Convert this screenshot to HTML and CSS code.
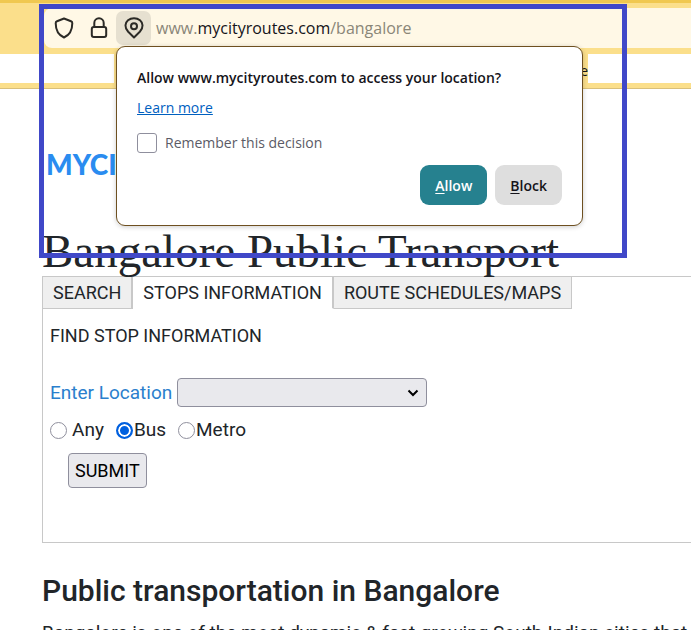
FILE: index.html
```html
<!DOCTYPE html>
<html lang="en">
<head>
    <meta charset="UTF-8">
    <meta name="viewport" content="width=device-width, initial-scale=1.0">
    <title>Bangalore Public Transport</title>
    <link rel="stylesheet" href="styles.css">
</head>
<body>

<header class="browser">
    <div class="toolbar">
        <div class="address-bar">
            <button class="icon-btn" aria-label="Tracking protection">
                <svg width="20" height="22" viewBox="0 0 20 22"><path d="M10 1.5 L17 4.3 Q18.3 4.8 18.3 6.2 C18.3 13 15.5 18 10 20.5 C4.5 18 1.7 13 1.7 6.2 Q1.7 4.8 3 4.3 Z"/></svg>
            </button>
            <button class="icon-btn" aria-label="Site security">
                <svg width="20" height="22" viewBox="0 0 20 22"><rect x="2.8" y="10" width="14.4" height="10" rx="2"/><path d="M5.3 10 V6 a4.7 4.7 0 0 1 9.4 0 V10"/></svg>
            </button>
            <button class="icon-btn active" aria-label="Location permission">
                <svg width="20" height="22" viewBox="0 0 20 22"><path d="M10 20.5 L4.2 14.8 C0.2 10.5 1 5.8 4 3.3 C7.4 0.5 12.6 0.5 16 3.3 C19 5.8 19.8 10.5 15.8 14.8 Z"/><circle cx="10" cy="9.2" r="3"/></svg>
            </button>
            <span class="url">www.<b>mycityroutes.com</b>/bangalore</span>
        </div>
    </div>
    <div class="bookmarks">
        <div class="blank left"></div>
        <span class="bookmark">e</span>
        <div class="blank right"></div>
    </div>
</header>

<main class="page">
    <a href="#" class="logo">MYCI</a>
    <h1>Bangalore Public Transport</h1>

    <section class="panel">
        <nav class="tabs">
            <button class="tab">SEARCH</button>
            <button class="tab selected">STOPS INFORMATION</button>
            <button class="tab">ROUTE SCHEDULES/MAPS</button>
        </nav>
        <form class="stop-form">
            <p class="form-title">FIND STOP INFORMATION</p>
            <div class="location-row">
                <label for="location">Enter Location</label>
                <select id="location"><option></option></select>
            </div>
            <div class="radio-row">
                <input type="radio" name="mode" id="any"><label for="any" class="spaced">Any</label>
                <input type="radio" name="mode" id="bus" checked><label for="bus">Bus</label>
                <input type="radio" name="mode" id="metro"><label for="metro">Metro</label>
            </div>
            <button type="button" class="submit">SUBMIT</button>
        </form>
    </section>

    <h2>Public transportation in Bangalore</h2>
    <p class="intro">Bangalore is one of the most dynamic &amp; fast-growing South-Indian cities that</p>
</main>

<div class="highlight"></div>

<div class="popup" role="dialog">
    <p class="question">Allow www.mycityroutes.com to access your location?</p>
    <a href="#" class="learn">Learn more</a>
    <div class="remember">
        <input type="checkbox" id="remember">
        <label for="remember">Remember this decision</label>
    </div>
    <div class="actions">
        <button class="allow"><u>A</u>llow</button>
        <button class="block"><u>B</u>lock</button>
    </div>
</div>

</body>
</html>
```
FILE: styles.css
```css
:root {
    --yellow: #fbdf8b;
    --line: #c8c8c8;
    --text: #212529;
    --control: #e9e9ed;
}

* {
    box-sizing: border-box;
}

body {
    margin: 0;
    height: 100vh;
    overflow: hidden;
    position: relative;
    background-color: #fff;
    color: var(--text);
    font-family: Roboto, sans-serif;
    font-size: 19px;
}

button, select {
    font-family: inherit;
    color: inherit;
}

h1, h2, p {
    margin: 0;
}

/* browser bars */
.toolbar {
    background-color: var(--yellow);
    border-top: 3px solid #f0c850;
    padding: 5px 0 6px 44px;
}

.address-bar {
    display: flex;
    align-items: center;
    height: 40px;
    padding-left: 2px;
    background-color: #fff8e6;
    border-radius: 8px 0 0 8px;
}

.icon-btn {
    display: flex;
    align-items: center;
    justify-content: center;
    width: 35px;
    height: 34px;
    padding: 0;
    border: none;
    border-radius: 7px;
    background: none;
}

.icon-btn.active {
    background-color: #e6e0d0;
}

.icon-btn svg {
    fill: none;
    stroke: #2b2a26;
    stroke-width: 2;
    stroke-linejoin: round;
}

.url {
    margin-left: 5px;
    font-family: "Open Sans", "Noto Sans", sans-serif;
    font-size: 16px;
    line-height: 36px;
    padding-bottom: 0;
    color: #8a8678;
}

.url b {
    font-weight: normal;
    color: #15141a;
}

.bookmarks {
    display: flex;
    height: 35px;
    padding-bottom: 5px;
    background-color: var(--yellow);
    border-bottom: 1px solid #d9c07a;
}

.blank {
    background-color: #fff;
}

.blank.left {
    width: 114px;
}

.blank.right {
    flex: 1;
}

.bookmark {
    width: 474px;
    text-align: right;
    font-family: "Open Sans", "Noto Sans", sans-serif;
    font-size: 14px;
    line-height: 34px;
    color: #15141a;
}

/* page */
.page {
    padding-left: 42px;
}

.logo {
    display: block;
    padding: 57px 0 0 4px;
    font-family: Lato, sans-serif;
    font-size: 28px;
    font-weight: 900;
    line-height: 36px;
    color: #2a8cf0;
    text-decoration: none;
}

h1 {
    margin-top: 45px;
    font-family: "Liberation Serif", serif;
    font-size: 47px;
    font-weight: normal;
    line-height: 49px;
    white-space: nowrap;
}

.panel {
    height: 267px;
    border: 1px solid var(--line);
    border-right: none;
}

.tabs {
    display: flex;
}

.tab {
    height: 32px;
    padding: 0 10px;
    border: solid var(--line);
    border-width: 0 2px 1px 0;
    background-color: #efefef;
    font-size: 18px;
    white-space: nowrap;
}

.tab.selected {
    border-bottom-color: transparent;
    background-color: #fff;
}

.tab:last-child {
    border-right-width: 1px;
}

.stop-form {
    padding: 15px 7px;
}

.form-title {
    font-size: 18px;
    line-height: 24px;
}

.location-row {
    display: flex;
    align-items: center;
    gap: 5px;
    margin-top: 30px;
}

.location-row label {
    color: #2b7fcd;
}

select {
    width: 250px;
    height: 29px;
    padding: 0 7px;
    border: 1px solid #8f8f9d;
    border-radius: 4px;
    appearance: none;
    background: var(--control) url("data:image/svg+xml,%3Csvg xmlns='http://www.w3.org/2000/svg' width='12' height='8' viewBox='0 0 12 8'%3E%3Cpath d='M1.5 1.5 6 6l4.500-4.500' fill='none' stroke='%23000' stroke-width='2'/%3E%3C/svg%3E") no-repeat right 7px center;
}

.radio-row {
    display: flex;
    align-items: center;
    margin-top: 11px;
    line-height: 24px;
}

.radio-row label {
    margin-right: 12px;
}

.radio-row .spaced {
    margin-left: 4px;
}

input[type="radio"] {
    width: 17px;
    height: 17px;
    margin: 0 1px 0 0;
    border: 1px solid #8f8f9d;
    border-radius: 50%;
    appearance: none;
    background-color: #fff;
}

input[type="radio"]:checked {
    border: 2px solid #0060df;
    background-color: #0060df;
    box-shadow: inset 0 0 0 2px #fff;
}

.submit {
    height: 35px;
    margin: 11px 0 0 18px;
    padding: 0 6px;
    border: 1px solid #8f8f9d;
    border-radius: 4px;
    background-color: var(--control);
    font-size: 18px;
    color: #000;
}

h2 {
    margin-top: 30px;
    font-size: 30px;
    font-weight: 500;
    line-height: 36px;
    white-space: nowrap;
}

.intro {
    margin-top: 12px;
    line-height: 24px;
    white-space: nowrap;
}

/* frame drawn round the address bar and the popup */
.highlight {
    position: absolute;
    top: 4px;
    left: 39px;
    width: 588px;
    height: 254px;
    border: 5px solid #4048c8;
    pointer-events: none;
}

/* permission popup */
.popup {
    position: absolute;
    top: 46px;
    left: 116px;
    width: 467px;
    padding: 20px;
    border: 1px solid #6e5020;
    border-radius: 9px;
    background-color: #fff;
    box-shadow: 0 1px 5px rgba(0, 0, 0, 0.2);
    font-family: "Open Sans", "Noto Sans", sans-serif;
    font-size: 14px;
    line-height: 22px;
    color: #15141a;
}

.question {
    font-weight: 600;
}

.learn {
    display: block;
    margin-top: 8px;
    color: #0060bf;
}

.remember {
    display: flex;
    align-items: center;
    gap: 8px;
    margin-top: 13px;
    color: #5b5b66;
}

input[type="checkbox"] {
    width: 20px;
    height: 20px;
    margin: 0;
    border: 1px solid #8f8f9d;
    border-radius: 3px;
    appearance: none;
    background-color: #fff;
}

.actions {
    display: flex;
    justify-content: flex-end;
    gap: 8px;
    margin-top: 11px;
}

.actions button {
    height: 40px;
    padding: 0 15px;
    border: none;
    border-radius: 9px;
    font-size: 14px;
    font-weight: 600;
}

.actions u {
    text-underline-offset: 2px;
}

.actions .allow {
    background-color: #26818f;
    color: #fff;
}

.actions .block {
    background-color: #dedede;
}
```
